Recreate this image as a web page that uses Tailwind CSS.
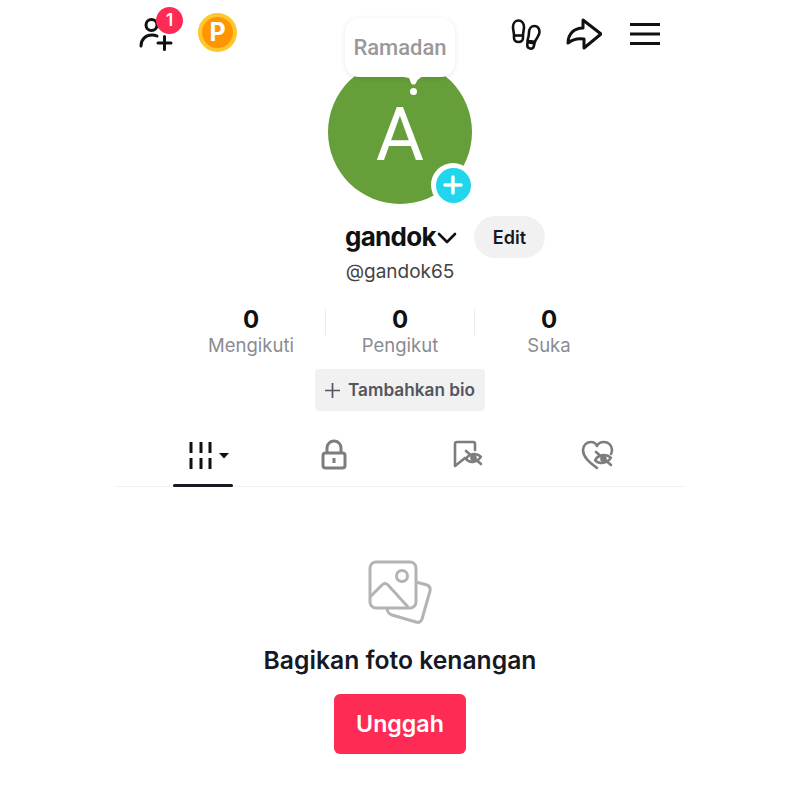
<!DOCTYPE html>
<html>
<head>
<meta charset="utf-8">
<script src="https://cdn.jsdelivr.net/npm/@tailwindcss/browser@4"></script>
</head>
<body class="bg-white">
<div class="w-[800px] h-[800px] bg-white font-['Inter','Liberation_Sans',sans-serif] overflow-hidden">
  <div class="w-[570px] mx-auto flex flex-col items-center">
    <!-- header -->
    <div class="w-full h-[60px] pl-[24px] pr-[25px] flex justify-between items-start pt-[7px]">
      <div class="flex items-start gap-[25px]">
        <div class="relative w-[34px] h-[44px]">
          <svg class="absolute left-0 top-[9px]" width="36" height="36" viewBox="0 0 36 36" fill="none" stroke="#111" stroke-width="3" stroke-linecap="round">
            <circle cx="12.500" cy="9" r="5.500"/>
            <path d="M2 30c0-7 5-11 11-11 2 0 4 .5 5 1"/>
            <path d="M19 27h13M25.500 20.500v13"/>
          </svg>
          <div class="absolute left-[17px] top-0 w-[27px] h-[27px] rounded-full bg-[#fe2c55] text-white text-[17px] font-semibold flex items-center justify-center">1</div>
        </div>
        <div class="w-[39px] h-[39px] mt-[6px] rounded-full bg-[#ff9500] border-[4px] border-[#fdc82f] flex items-center justify-center text-white text-[25px] font-bold leading-none">P</div>
      </div>
      <div class="flex items-start pt-[11px]">
        <svg width="32" height="34" viewBox="0 0 32 34" fill="none" stroke="#111" stroke-width="2.600" stroke-linejoin="round">
          <path d="M3 9c0-4 2.500-6.500 5.500-6.500S14 5 14 9c0 3-1 5-1 8.500v2.500c0 2.500-2 4-4.500 4S4 22.500 4 20v-2.500C4 14 3 12 3 9z"/>
          <path d="M4.500 17.500h8"/>
          <path d="M29.500 14c0-3.500-2-6-5-6-3.500 0-5.500 3-5.500 6.500 0 2.500-.5 5-1.500 8l7.500 1.500c.5-3.500 4.500-5.500 4.500-10z"/>
          <path d="M17.500 24l7 1.500-.6 2.500c-.5 2-2 3-3.800 2.600S17 28.500 17.300 26.500z"/>
        </svg>
        <svg class="ml-[24px]" width="36" height="32" viewBox="0 0 36 32" fill="none" stroke="#111" stroke-width="3" stroke-linejoin="round">
          <path d="M17 2l18 14-17 14v-9c-6-1-11 0-16 4 0-9 6-15 15-15z"/>
        </svg>
        <svg class="ml-[28px] mt-[4px]" width="30" height="24" viewBox="0 0 30 24" fill="none" stroke="#111" stroke-width="3">
          <path d="M0 2.500h30M0 12h30M0 21.500h30"/>
        </svg>
      </div>
    </div>

    <!-- avatar -->
    <div class="relative w-[144px] h-[144px]">
      <div class="w-full h-full rounded-full bg-[#669e3a] flex items-center justify-center text-white text-[74px] leading-none font-['Roboto',sans-serif] pt-[6px]">A</div>
      <div class="absolute left-[17px] top-[-42px] w-[110px] h-[59px] bg-white rounded-[14px] shadow-[0_1px_5px_rgba(0,0,0,0.1)] flex items-center justify-center text-[22px] font-medium text-[#999] font-['Roboto',sans-serif]">Ramadan</div>
      <svg class="absolute left-[70px] top-[16px]" width="28" height="10" viewBox="0 0 28 10" fill="#fff"><path d="M0 0h28c-6 1-8 3-10 7-1 2-4 2-5 0-1-3-2-5-2-5z"/></svg>
      <div class="absolute left-[82px] top-[28px] w-[7px] h-[7px] bg-white rounded-full"></div>
      <div class="absolute left-[103px] top-[103px] w-[44px] h-[44px] rounded-full bg-white flex items-center justify-center">
        <div class="w-[35px] h-[35px] rounded-full bg-[#20d5ec] flex items-center justify-center">
          <svg width="22" height="22" viewBox="0 0 22 22" stroke="#fff" stroke-width="3.500" stroke-linecap="round"><path d="M3 11h16M11 3v16"/></svg>
        </div>
      </div>
    </div>

    <!-- name -->
    <div class="w-full mt-[12px] flex items-center h-[42px] pl-[230px]">
      <span class="text-[26px] font-bold text-[#111] leading-none tracking-[-0.7px]">gandok</span>
      <svg class="ml-[1px] mt-[1px]" width="20" height="12" viewBox="0 0 20 12" fill="none" stroke="#111" stroke-width="2.600" stroke-linecap="round" stroke-linejoin="round"><path d="M2 2l8 8 8-8"/></svg>
      <div class="ml-[17px] w-[71px] h-[42px] rounded-full bg-[#f1f1f2] flex items-center justify-center text-[18px] font-semibold text-[#161823]">Edit</div>
    </div>
    <div class="mt-[1px] text-[19px] leading-[26px] text-[#444]">@gandok65</div>

    <!-- stats -->
    <div class="w-full mt-[21px] h-[50px] flex justify-center">
      <div class="w-[148px] flex flex-col items-center">
        <span class="text-[24px] font-bold leading-[28px] text-[#111]">0</span>
        <span class="text-[18.500px] leading-[22px] text-[#8a8b91]">Mengikuti</span>
      </div>
      <div class="w-px h-[26px] mt-[3px] bg-[#ececec]"></div>
      <div class="w-[148px] flex flex-col items-center">
        <span class="text-[24px] font-bold leading-[28px] text-[#111]">0</span>
        <span class="text-[18.500px] leading-[22px] text-[#8a8b91]">Pengikut</span>
      </div>
      <div class="w-px h-[26px] mt-[3px] bg-[#ececec]"></div>
      <div class="w-[148px] flex flex-col items-center">
        <span class="text-[24px] font-bold leading-[28px] text-[#111]">0</span>
        <span class="text-[18.500px] leading-[22px] text-[#8a8b91]">Suka</span>
      </div>
    </div>

    <!-- bio -->
    <div class="mt-[13px] w-[170px] h-[42px] rounded-[4px] bg-[#f1f1f2] flex items-center justify-center gap-[8px] text-[17.200px] font-semibold text-[#54555e]">
      <svg width="15" height="15" viewBox="0 0 15 15" stroke="#54555e" stroke-width="1.700"><path d="M0 7.500h15M7.500 0v15"/></svg>
      <span>Tambahkan bio</span>
    </div>

    <!-- tabs -->
    <div class="w-full mt-[26px] h-[50px] border-b border-[#f1f1f1] flex items-start pl-[58px]">
      <div class="relative w-[60px] h-[50px] pl-[15px] pt-[4px]">
        <svg width="42" height="30" viewBox="0 0 42 30">
          <path fill="none" stroke="#111" stroke-width="3" d="M3 1v11M13 1v11M22 1v11M3 17v11M13 17v11M22 17v11"/>
          <path fill="#111" d="M31 12h10l-5 5.500z"/>
        </svg>
        <div class="absolute left-0 bottom-[0px] w-[60px] h-[3px] bg-[#161823] rounded-full"></div>
      </div>
      <div class="ml-[87px] pt-[2px]">
        <svg width="28" height="32" viewBox="0 0 28 32" fill="none" stroke="#7d7d7d" stroke-width="3">
          <path d="M7 14V9a7 7 0 0 1 14 0v5"/>
          <rect x="3" y="14" width="22" height="15" rx="2.500"/>
          <path d="M14 19v5"/>
        </svg>
      </div>
      <div class="ml-[105px] pt-[3px]">
        <svg width="32" height="32" viewBox="0 0 32 32" fill="none" stroke="#7d7d7d" stroke-width="2.600" stroke-linejoin="round" stroke-linecap="round">
          <path d="M22 10V4a2 2 0 0 0-2-2H4a2 2 0 0 0-2 2v22l10-8"/>
          <path d="M13 18c3-5 11-5 15 0-4 5-12 5-15 0z" fill="#fff" transform="rotate(-10 20 18)"/>
          <circle cx="20.500" cy="18" r="2"/>
          <path d="M13 11l15 13"/>
        </svg>
      </div>
      <div class="ml-[96px] pt-[3px]">
        <svg width="34" height="32" viewBox="0 0 34 32" fill="none" stroke="#7d7d7d" stroke-width="2.600" stroke-linejoin="round" stroke-linecap="round">
          <path d="M16 28C8 22 2 17 2 10c0-5 4-8 8-8 3 0 5 1.500 6 4 1-2.500 4-4 7-4 4 0 8 3 8 8 0 2-.5 3-1 4"/>
          <path d="M14 19c3-5 12-5 16 0-4 5-13 5-16 0z" fill="#fff" transform="rotate(-10 22 19)"/>
          <circle cx="22.500" cy="19" r="2"/>
          <path d="M15 12l15 13"/>
        </svg>
      </div>
    </div>

    <!-- empty state -->
    <svg class="mt-[72px]" width="64" height="67" viewBox="0 0 64 67" fill="none" stroke="#b3b3b3" stroke-width="3" stroke-linejoin="round">
      <rect x="2" y="3" width="46" height="46" rx="6"/>
      <circle cx="34" cy="17" r="5.500"/>
      <path d="M2 38l12-12c2-2 4-2 6 0l20 22"/>
      <path d="M48 23l11 3c3 1 3.500 3 3 6l-8 28c-1 3-3 4-6 3l-24-7c-3-1-4-2-5-6"/>
    </svg>
    <div class="mt-[19px] text-[24.700px] leading-[30px] font-semibold text-[#161823]">Bagikan foto kenangan</div>
    <div class="mt-[19px] w-[132px] h-[60px] rounded-[6px] bg-[#fe2c55] flex items-center justify-center text-white text-[23.200px] font-semibold">Unggah</div>
  </div>
</div>
</body>
</html>
